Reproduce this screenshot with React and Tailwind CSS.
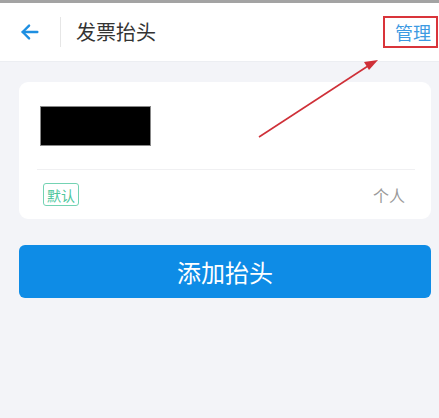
const App = () => {
  return (
    <div
      className="relative w-[439px] h-[418px] overflow-hidden bg-[#f3f4f8]"
      style={{ fontFamily: '"Noto Sans CJK SC", "Noto Sans", sans-serif' }}
    >
      {/* status bar remnant */}
      <div className="h-[3px] bg-[#a3a3a3]" />

      {/* Header */}
      <div className="flex items-center h-[59px] bg-white border-b border-[#eceef2]">
        <button className="w-[60px] h-full flex items-center justify-center">
          <svg width="22" height="22" viewBox="0 0 24 24" fill="none" stroke="#1e8fe1" strokeWidth="2.6" strokeLinecap="round" strokeLinejoin="round">
            <path d="M20 12H4" />
            <path d="M11 5l-7 7 7 7" />
          </svg>
        </button>
        <div className="w-px h-[30px] bg-[#e6e6e6]" />
        <div className="ml-[15px] text-[20px] text-[#333] leading-none">发票抬头</div>
        <div className="ml-auto mr-[1px] h-[32px] pl-[10px] pr-[5px] flex items-center border-2 border-[#d9343a] text-[18px] text-[#3d9ae2] leading-none">
          管理
        </div>
      </div>

      <div className="pl-[19px] pr-[8px] pt-[20px]">
        {/* Card */}
        <div className="bg-white rounded-[9px] pl-[18px] pr-[16px]">
          <div className="h-[87px] flex items-center pl-[3px]">
            <div className="w-[111px] h-[40px] bg-black border border-[#888]" />
          </div>
          <div className="h-px bg-[#f0f0f2]" />
          <div className="h-[49px] flex items-center justify-between pl-[6px] pr-[10px]">
            <span className="h-[23px] px-[3px] flex items-center border border-[#74d3b3] rounded-[3px] text-[14px] text-[#4dc79c] leading-none">
              默认
            </span>
            <span className="text-[16px] text-[#9a9a9a] leading-none">个人</span>
          </div>
        </div>

        {/* Add button */}
        <button className="mt-[26px] w-full h-[53px] rounded-[6px] bg-[#0e8ce6] text-white text-[24px] leading-none flex items-center justify-center">
          添加抬头
        </button>
      </div>

      {/* annotation arrow */}
      <svg className="absolute left-0 top-0 pointer-events-none" width="439" height="418">
        <line x1="259" y1="137" x2="368" y2="66" stroke="#cf3038" strokeWidth="1.6" />
        <polygon points="378,60 364,62 369,70" fill="#cf3038" />
      </svg>
    </div>
  );
};

export default App;
